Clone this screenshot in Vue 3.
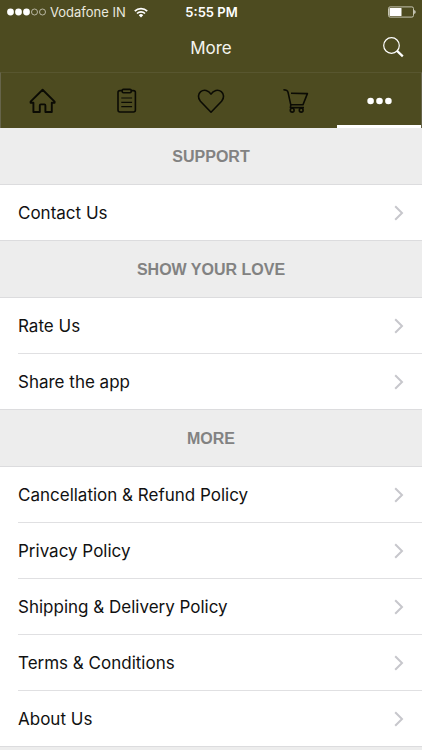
<template>
  <div class="app">
    <header class="top">
      <div class="status-bar">
        <div class="carrier">
          <svg class="signal" width="39" height="8" viewBox="0 0 39 8">
            <circle
              v-for="n in 5"
              :key="n"
              :cx="n * 8 - 4.5"
              cy="4"
              :r="n <= 3 ? 3.4 : 3"
              :fill="n <= 3 ? '#fff' : 'none'"
              :stroke="n <= 3 ? 'none' : '#d2d1c2'"
              stroke-width="0.8"
            />
          </svg>
          <span>Vodafone IN</span>
          <svg class="wifi" width="14" height="11" viewBox="0 0 14 11">
            <g fill="none" stroke="#fff" stroke-width="1.7">
              <path d="M0.8 4.1a8.8 8.8 0 0 1 12.4 0" />
              <path d="M3 6.5a5.7 5.7 0 0 1 8 0" />
            </g>
            <path d="M7 10.4L4.8 8.2a3.1 3.1 0 0 1 4.4 0z" fill="#fff" />
          </svg>
        </div>
        <div class="clock">5:55 PM</div>
        <div class="battery">
          <svg width="28" height="12" viewBox="0 0 28 12">
            <rect x="0.5" y="0.9" width="25" height="10.2" rx="1.6" fill="none" stroke="#c5c4b1" />
            <rect x="1.5" y="1.9" width="12" height="8.2" rx="0.5" fill="#fff" />
            <path d="M26.4 4v4c1.5-0.5 1.5-3.5 0-4z" fill="#fff" />
          </svg>
        </div>
      </div>

      <div class="nav-bar">
        <h1 class="nav-title">More</h1>
        <button class="search-btn" type="button" aria-label="Search">
          <svg width="22" height="22" viewBox="0 0 22 22" fill="none" stroke="#fff">
            <circle cx="9.5" cy="8.5" r="7.8" stroke-width="1.2" />
            <path d="M14.8 13.6l6 5.8" stroke-width="2.2" />
          </svg>
        </button>
      </div>
    </header>

    <nav class="tabs">
      <button
        v-for="tab in tabs"
        :key="tab"
        class="tab"
        :class="{ active: tab === activeTab }"
        type="button"
        :aria-label="tab"
        @click="activeTab = tab"
      >
        <svg v-if="tab === 'Home'" class="icon" viewBox="0 0 28 28">
          <path class="bold" d="M13.6 2.8L1.6 14.6v1.2h2.800v9.200h6.400v-6.600q0-1 1-1h3.600q1 0 1 1v6.600h6.400v-9.200H25.600V14.600z" />
        </svg>
        <svg v-else-if="tab === 'Orders'" class="icon" viewBox="0 0 28 28">
          <rect x="5" y="3.6" width="17.4" height="21.4" rx="2" />
          <rect class="clip" x="9.2" y="2.4" width="9" height="3.4" rx="1.2" />
          <path class="thin" d="M8.3 11h10.8M8.3 15.3h10.8M8.3 19.6h10.8" />
        </svg>
        <svg v-else-if="tab === 'Wishlist'" class="icon" viewBox="0 0 28 28">
          <path d="M14 25.2L3.4 14.2C0.6 11 1 6.7 3.7 4.6c3.2-2.5 7.9-1.4 10.3 2.5c2.4-3.9 7.1-5 10.3-2.5c2.7 2.1 3.1 6.4 0.3 9.600z" />
        </svg>
        <svg v-else-if="tab === 'Cart'" class="icon" viewBox="0 0 28 28">
          <path d="M2.4 2.8Q6.400 2.800 7 5.200L9.800 17.800H22L26.400 6.600L10 6.200" />
          <path d="M9.800 17.800L9.400 20.600H23" />
          <circle cx="11.200" cy="23.200" r="1.900" />
          <circle cx="20.200" cy="23.200" r="1.900" />
        </svg>
        <svg v-else class="icon dots" viewBox="0 0 28 28">
          <circle cx="5.6" cy="14" r="3.3" />
          <circle cx="14.500" cy="14" r="3.3" />
          <circle cx="23.400" cy="14" r="3.3" />
        </svg>
      </button>
    </nav>

    <main>
      <section v-for="section in sections" :key="section.title">
        <h2 class="section-title">{{ section.title }}</h2>
        <ul class="list">
          <li v-for="item in section.items" :key="item">
            <a class="row" href="#">
              <span>{{ item }}</span>
              <svg width="10" height="16" viewBox="0 0 10 16">
                <path d="M1.2 1.2L8 8l-6.8 6.8" fill="none" stroke="#c7c7cc" stroke-width="2" />
              </svg>
            </a>
          </li>
        </ul>
      </section>
    </main>
  </div>
</template>

<script setup>
import { ref } from 'vue';

const tabs = ['Home', 'Orders', 'Wishlist', 'Cart', 'More'];
const activeTab = ref('More');

const sections = [
  { title: 'SUPPORT', items: ['Contact Us'] },
  { title: 'SHOW YOUR LOVE', items: ['Rate Us', 'Share the app'] },
  {
    title: 'MORE',
    items: [
      'Cancellation & Refund Policy',
      'Privacy Policy',
      'Shipping & Delivery Policy',
      'Terms & Conditions',
      'About Us',
    ],
  },
];
</script>

<style>
body {
  margin: 0;
  background: #ededed;
}
</style>

<style scoped>
.app {
  min-height: 100vh;
  box-sizing: border-box;
  background: #ededed;
  font-family: Inter, "Liberation Sans", sans-serif;
  color: #111;
}

button {
  margin: 0;
  padding: 0;
  border: 0;
  background: none;
  cursor: pointer;
}

svg {
  display: block;
}

.top {
  background: #4d4b20;
  color: #fff;
}

.status-bar {
  display: grid;
  grid-template-columns: 1fr auto 1fr;
  align-items: center;
  height: 24px;
  padding: 0 6px 0 7px;
  font-size: 13px;
}

.carrier {
  display: flex;
  align-items: center;
  gap: 4px;
  white-space: nowrap;
  color: #e9e8df;
}

.wifi {
  margin-left: 4px;
}

.clock {
  font-weight: 600;
}

.battery {
  justify-self: end;
}

.nav-bar {
  display: grid;
  grid-template-columns: 1fr auto 1fr;
  align-items: center;
  height: 48px;
  padding: 0 18px;
}

.nav-title {
  grid-column: 2;
  margin: 0;
  font-size: 17px;
  font-weight: 400;
  color: #f4f4ee;
}

.search-btn {
  justify-self: end;
}

.tabs {
  display: flex;
  height: 56px;
  box-sizing: border-box;
  border: 1px solid #66644a;
  border-top-color: #58562f;
  border-bottom: 0;
  background: #4d4b20;
}

.tab {
  flex: 1;
  display: flex;
  align-items: center;
  justify-content: center;
  border-bottom: 3px solid transparent;
  padding-top: 3px;
}

.tab.active {
  border-bottom-color: #fff;
}

.icon {
  width: 28px;
  height: 28px;
  fill: none;
  stroke: #0b0b04;
  stroke-width: 1.6;
  stroke-linejoin: round;
}

.icon .bold {
  stroke-width: 1.9;
}

.icon .clip {
  fill: #4d4b20;
}

.icon .thin {
  stroke-width: 1.2;
}

.icon.dots {
  fill: #fff;
  stroke: none;
}

.section-title {
  margin: 0;
  height: 57px;
  box-sizing: border-box;
  border-bottom: 1px solid #dcdcde;
  font: bold 16px/57px "Liberation Sans", Arial, sans-serif;
  text-align: center;
  color: #828282;
}

.list {
  margin: 0;
  padding: 0;
  list-style: none;
  background: #fff;
  border-bottom: 1px solid #dcdcde;
}

.list li {
  padding-left: 18px;
}

.list li + li {
  background: linear-gradient(#e0e0e2, #e0e0e2) 18px 0 / 100% 1px no-repeat;
  padding-top: 1px;
}

.row {
  display: flex;
  align-items: center;
  justify-content: space-between;
  height: 55px;
  padding-right: 18px;
  font-size: 17px;
  line-height: 20px;
  color: inherit;
  text-decoration: none;
}
</style>
